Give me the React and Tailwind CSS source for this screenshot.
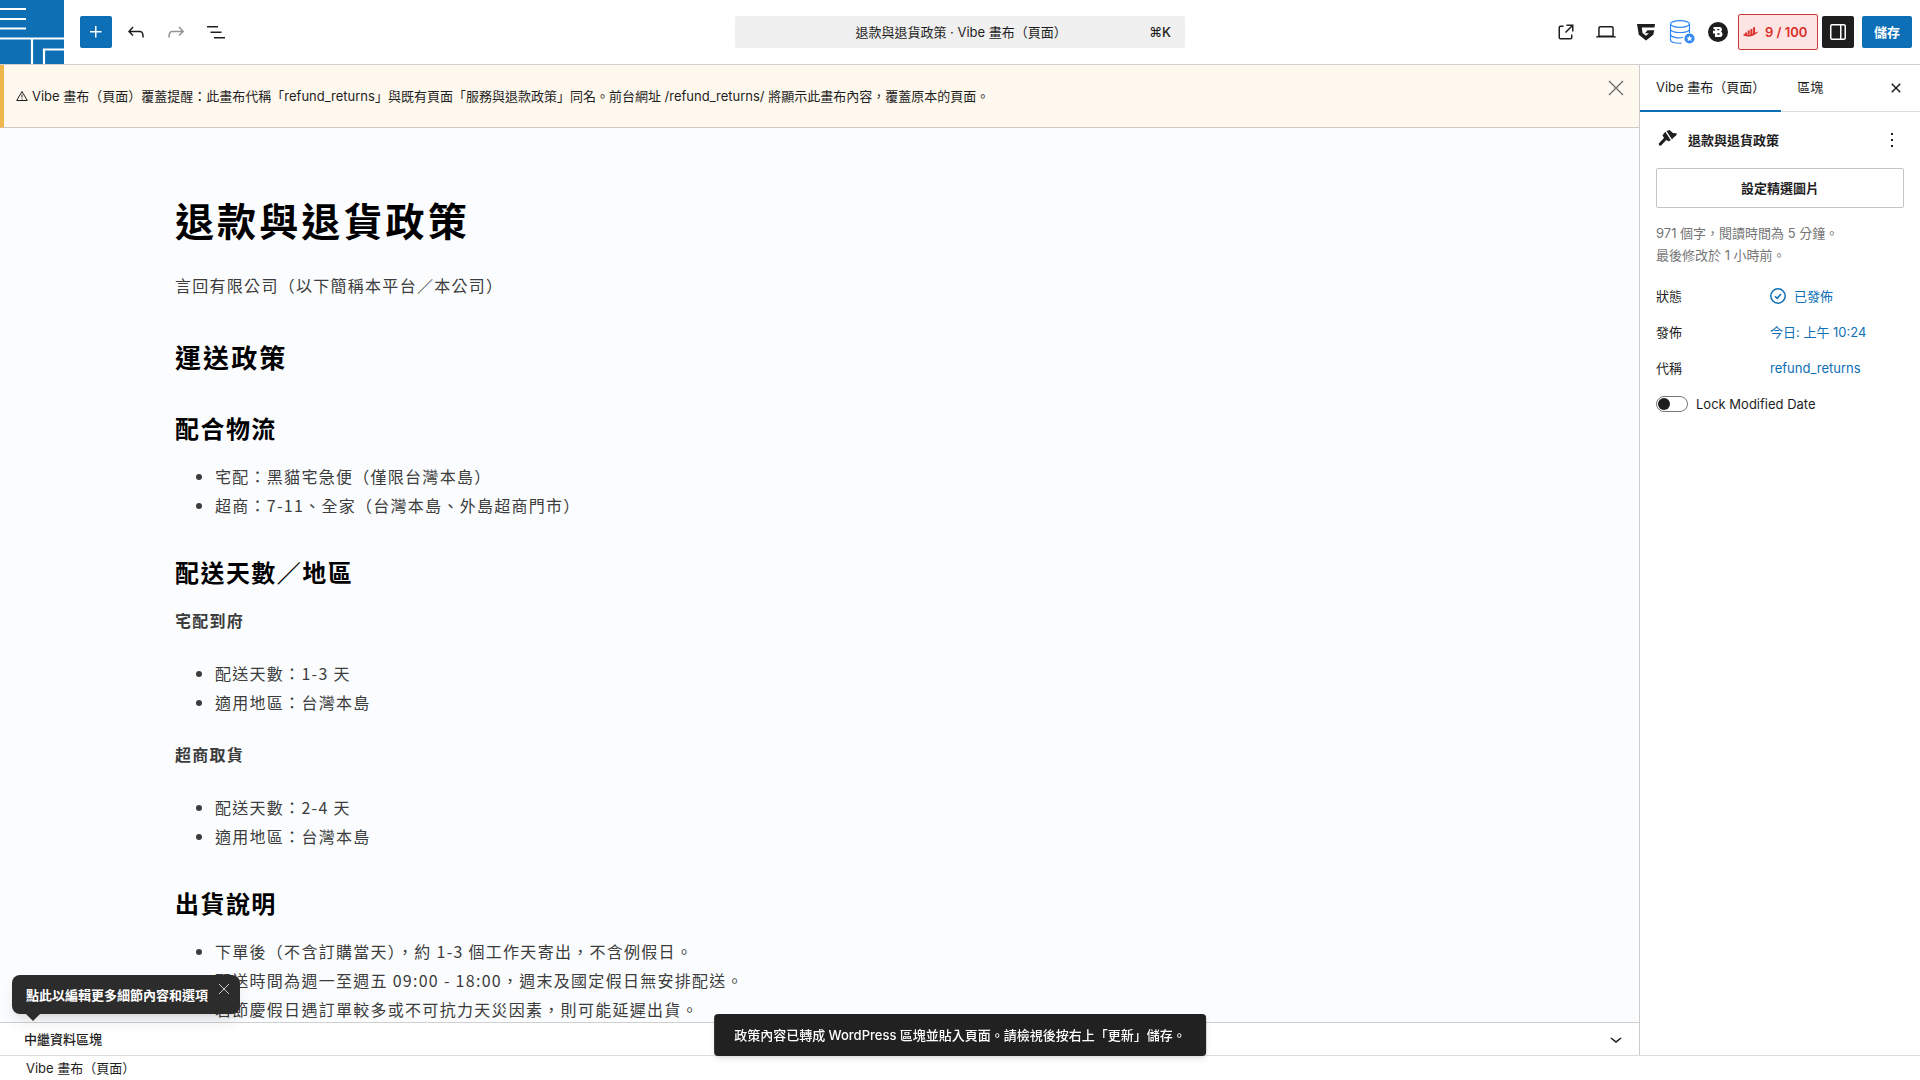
import React from 'react';

const paths = {
    plus: 'M11 12.5V17.5H12.5V12.5H17.5V11H12.5V6H11V11H6V12.5H11Z',
    undo: 'M18.3 11.7c-.6-.6-1.4-.9-2.3-.9H6.7l2.9-3.3-1.1-1-4.5 5L8.5 16l1-1-2.7-2.7H16c.5 0 .9.2 1.3.5 1 1 1 3.4 1 4.5v.3h1.5v-.2c0-1.5 0-4.3-1.5-5.7z',
    redo: 'M15.6 6.5l-1.1 1 2.9 3.3H8c-.9 0-1.7.3-2.3.9-1.4 1.5-1.4 4.2-1.4 5.6v.2h1.5v-.3c0-1.1 0-3.5 1-4.5.3-.3.7-.5 1.3-.5h9.2L14.5 15l1.1 1.1 4.6-4.6-4.6-5z',
    listView: 'M3 6h11v1.5H3V6Zm3.5 5.5h11V13h-11v-1.5ZM21 17H10v1.5h11V17Z',
    external: 'M19.5 4.5h-7V6h4.44l-5.97 5.97 1.06 1.06L18 7.06v4.44h1.5v-7Zm-13 1a2 2 0 0 0-2 2v10a2 2 0 0 0 2 2h10a2 2 0 0 0 2-2v-3H17v3a.5.5 0 0 1-.5.5h-10a.5.5 0 0 1-.5-.5v-10a.5.5 0 0 1 .5-.5h3V5.5h-3Z',
    desktop: 'M20.5 16h-.7V8c0-1.1-.9-2-2-2H6.2c-1.1 0-2 .9-2 2v8h-.7c-.8 0-1.5.7-1.5 1.5h20c0-.8-.7-1.5-1.5-1.5zM5.7 8c0-.3.2-.5.5-.5h11.6c.3 0 .5.2.5.5v7.6H5.7V8z',
    drawer: 'M18 4H6c-1.1 0-2 .9-2 2v12c0 1.1.9 2 2 2h12c1.1 0 2-.9 2-2V6c0-1.1-.9-2-2-2zm-4 14.5H6c-.3 0-.5-.2-.5-.5V6c0-.3.2-.5.5-.5h8v13zm4.5-.5c0 .3-.2.5-.5.5h-2.5v-13H18c.3 0 .5.2.5.5v12z',
    close: 'M12 13.06l3.712 3.713 1.061-1.06L13.061 12l3.712-3.712-1.06-1.06L12 10.938 8.288 7.227l-1.061 1.06L10.939 12l-3.712 3.712 1.06 1.061L12 13.061z',
    more: 'M13 19h-2v-2h2v2zm0-6h-2v-2h2v2zm0-6h-2V5h2v2z',
    chevron: 'M17.5 11.6L12 16l-5.5-4.4.9-1.2L12 14l4.5-3.6 1 1.2z',
};

const Icon = ({ name, className = 'size-6' }) => (
    <svg viewBox="0 0 24 24" fill="currentColor" aria-hidden="true" className={className}>
        <path d={paths[name]} />
    </svg>
);

const IconButton = ({ label, className = '', children, ...rest }) => (
    <button type="button" aria-label={label} className={`flex size-8 shrink-0 items-center justify-center ${className}`} {...rest}>
        {children}
    </button>
);

const SiteLogo = () => (
    <svg viewBox="0 0 64 64" className="size-16" aria-hidden="true">
        <rect width="64" height="64" fill="#0f6fb4" />
        <g stroke="#fff" strokeWidth="2.2" fill="none">
            <path d="M0 9H26M0 19H26M0 28.5H26M0 38.5H64M32 39V64M44 64V49.5H64" />
        </g>
    </svg>
);

const Header = () => (
    <header className="grid h-[65px] shrink-0 grid-cols-[1fr_auto_1fr] items-center border-b border-[#d0d0d0] bg-white">
        <div className="flex items-center">
            <a href="#dashboard" aria-label="返回" className="block"><SiteLogo /></a>
            <div className="ml-4 flex items-center gap-2">
                <IconButton label="新增區塊" className="rounded-xs bg-[#0d6fb6] text-white"><Icon name="plus" /></IconButton>
                <IconButton label="復原"><Icon name="undo" /></IconButton>
                <IconButton label="重做" className="text-[#949494]"><Icon name="redo" /></IconButton>
                <IconButton label="文件概覽"><Icon name="listView" /></IconButton>
            </div>
        </div>

        <button type="button" className="flex h-8 w-[450px] items-center rounded-xs bg-[#f0f0f0] px-3.5">
            <span className="flex-1 pl-6 text-center">退款與退貨政策 · Vibe 畫布（頁面）</span>
            <span className="font-medium">⌘K</span>
        </button>

        <div className="flex items-center justify-end gap-2 pr-2">
            <IconButton label="檢視頁面"><Icon name="external" /></IconButton>
            <IconButton label="預覽"><Icon name="desktop" /></IconButton>
            <div className="flex items-center gap-1">
                <IconButton label="Greenshift">
                    <svg viewBox="0 0 20 20" className="size-5" aria-hidden="true" fill="#1e1e1e">
                        <path d="M1 2H19L18.500 5.500H5.800L6.500 11L10 13.700L13 11.200H9L11.500 8.300H18.200L17.300 12.800L10 18.500L2.800 12.800Z" />
                    </svg>
                </IconButton>
                <IconButton label="資料庫">
                    <svg viewBox="0 0 26 26" className="size-[26px]" aria-hidden="true" fill="none" stroke="#2f86f2" strokeWidth="1.200">
                        <ellipse cx="11" cy="5" rx="9.500" ry="3.300" />
                        <path d="M1.500 5V21C1.500 23 6 24.500 12.500 24.200M20.500 5V14M1.500 10.500C3 14.500 19 14.500 20.500 10.500M1.500 15.800C3 18.800 10 19.500 14 18.300" />
                        <circle cx="20.500" cy="19.500" r="5" fill="#2f86f2" stroke="none" />
                        <path d="M20.500 16.500l1 2h2l-1.500 1.500.5 2.200-2-1.200-2 1.200.5-2.200-1.500-1.500h2z" fill="#fff" stroke="none" />
                    </svg>
                </IconButton>
                <IconButton label="Blocks">
                    <svg viewBox="0 0 20 20" className="size-5" aria-hidden="true">
                        <circle cx="10" cy="10" r="10" fill="#1e1e1e" />
                        <path d="M5.500 5H11.500C14 5 14.800 8 13 9.700C15.500 11 14.800 15 11.800 15H7V11.500H5V8.800H7V7.200H5.500Z" fill="#fff" />
                        <path d="M9.300 7.600H11.300M9.300 12H11.600" stroke="#1e1e1e" strokeWidth="1.300" />
                    </svg>
                </IconButton>
                <button type="button" className="flex h-9 w-20 items-center gap-1.5 rounded-xs border border-[#d0353d] bg-[#fce4e2] pl-1 font-semibold text-[#dc2f2b]">
                    <svg viewBox="0 0 15 10" className="h-2.5 w-4 shrink-0" aria-hidden="true" fill="currentColor">
                        <path d="M1.500 5.500H3.500V7H1.500ZM4.200 3.500H6.200V7H4.200ZM6.900 2H8.900V7H6.900ZM9.600 .3H11.600V6H9.600Z" />
                        <path d="M0 7.200C3 6.500 4.500 8.200 7 7.200L15 4.500C11 9.500 5 10.500 0 8.500Z" />
                    </svg>
                    <span>9 / 100</span>
                </button>
                <IconButton label="設定" className="rounded-xs bg-[#1e1e1e] text-white"><Icon name="drawer" /></IconButton>
            </div>
            <button type="button" className="h-8 rounded-xs bg-[#0d6fb6] px-3 font-semibold text-white">儲存</button>
        </div>
    </header>
);

const Notice = () => (
    <div className="flex h-[63px] shrink-0 justify-between border-b border-l-4 border-b-[#ccc9c2] border-l-[#f0b54d] bg-[#fef8ee] pl-3">
        <p className="self-center">
            <svg viewBox="0 0 12 12" className="mr-1 inline size-3 align-[-1px]" aria-hidden="true" fill="none" stroke="currentColor">
                <path d="M6 1.500L11.300 10.500H.7ZM6 4.500V7.500M6 8.500V9.500" />
            </svg>
            Vibe 畫布（頁面）覆蓋提醒：此畫布代稱「refund_returns」與既有頁面「服務與退款政策」同名。前台網址 /refund_returns/ 將顯示此畫布內容，覆蓋原本的頁面。
        </p>
        <button type="button" aria-label="關閉通知" className="mt-[7px] mr-[7px] flex size-8 items-center justify-center self-start text-[#666]">
            <svg viewBox="0 0 16 16" className="size-4" aria-hidden="true" stroke="currentColor" strokeWidth="1.200"><path d="M1 1L15 15M15 1L1 15" /></svg>
        </button>
    </div>
);

const SubHeading = ({ children, className = '' }) => (
    <h3 className={`mb-[18px] text-2xl font-bold tracking-[0.06em] text-black ${className}`}>{children}</h3>
);

const List = ({ items }) => (
    <ul className="list-disc pl-10">
        {items.map((item) => <li key={item}>{item}</li>)}
    </ul>
);

const Canvas = () => (
    <main className="min-h-0 flex-1 overflow-hidden bg-[#fbfcfe] px-[175px] pt-[63px] font-['Noto_Sans_CJK_TC',sans-serif] text-base/[29px] tracking-[0.08em] text-[#3c3c3c]">
        <h1 className="text-[39px]/[56px] font-bold tracking-[0.08em] text-black">退款與退貨政策</h1>
        <p className="mt-6">言回有限公司（以下簡稱本平台／本公司）</p>
        <h2 className="mt-[39px] mb-[37px] text-[26px]/[36px] font-bold tracking-[0.08em] text-black">運送政策</h2>
        <SubHeading>配合物流</SubHeading>
        <List items={['宅配：黑貓宅急便（僅限台灣本島）', '超商：7-11、全家（台灣本島、外島超商門市）']} />
        <SubHeading className="mt-9">配送天數／地區</SubHeading>
        <p className="mb-6 font-bold">宅配到府</p>
        <List items={['配送天數：1-3 天', '適用地區：台灣本島']} />
        <p className="mt-[23px] mb-6 font-bold">超商取貨</p>
        <List items={['配送天數：2-4 天', '適用地區：台灣本島']} />
        <SubHeading className="mt-9">出貨說明</SubHeading>
        <List
            items={[
                '下單後（不含訂購當天），約 1-3 個工作天寄出，不含例假日。',
                '配送時間為週一至週五 09:00 - 18:00，週末及國定假日無安排配送。',
                '若節慶假日遇訂單較多或不可抗力天災因素，則可能延遲出貨。',
            ]}
        />
    </main>
);

const MetaBoxes = () => (
    <div className="relative shrink-0 border-t border-[#d0d0d0] bg-white">
        <button type="button" className="flex h-8 w-full items-center justify-between pr-[11px] pl-6 font-medium">
            中繼資料區塊
            <Icon name="chevron" />
        </button>
        <div role="tooltip" className="absolute bottom-full left-3 mb-[9px] flex h-[39px] items-start rounded-lg bg-[#2c2c2c] pr-2.5 pl-3.5 font-semibold text-white shadow-lg">
            <span className="self-center">點此以編輯更多細節內容和選項</span>
            <button type="button" aria-label="關閉提示" className="mt-2 ml-2.5 text-[#ccc]">
                <svg viewBox="0 0 12 12" className="size-3" aria-hidden="true" stroke="currentColor"><path d="M1 1L11 11M11 1L1 11" /></svg>
            </button>
            <svg viewBox="0 0 14 7" className="absolute top-full left-3.5 h-[7px] w-3.5" aria-hidden="true" fill="#2c2c2c"><path d="M0 0H14L7 7Z" /></svg>
        </div>
    </div>
);

const Row = ({ label, children }) => (
    <div className="flex h-8 items-center">
        <dt className="w-[114px]">{label}</dt>
        <dd className="text-[#0d6fb6]">{children}</dd>
    </div>
);

const Sidebar = () => (
    <aside className="w-[281px] shrink-0 border-l border-[#ccc] bg-white">
        <div className="flex h-[47px] items-center border-b border-[#ddd]">
            <button type="button" className="h-[47px] border-b-2 border-[#0d6fb6] px-4">Vibe 畫布（頁面）</button>
            <button type="button" className="h-[47px] border-b-2 border-transparent px-4">區塊</button>
            <IconButton label="關閉設定" className="mr-2 ml-auto"><Icon name="close" /></IconButton>
        </div>
        <div className="p-4 pt-3">
            <div className="flex h-8 items-center">
                <svg viewBox="0 0 22 20" className="-mt-1 mr-2.5 h-5 w-[22px]" aria-hidden="true" fill="#1e1e1e">
                    <path d="M10.500 3L13.500 2L17 5L21 5.500C21 7 19 8.500 17.500 9.500L16 11.500Z" />
                    <path d="M9.300 3.800L14.800 12.200L12.500 13.300L10.300 12L5.300 17.300C4 18.500 2 16.800 3 15.300L8 10L6.500 7.300Z" />
                </svg>
                <h2 className="flex-1 font-semibold">退款與退貨政策</h2>
                <IconButton label="更多操作" className="-mr-1"><Icon name="more" /></IconButton>
            </div>
            <button type="button" className="mt-3 h-10 w-full rounded-xs border border-[#c4c4c4] font-semibold">設定精選圖片</button>
            <p className="mt-3.5 text-[13px]/[22px] text-[#757575]">
                971 個字，閱讀時間為 5 分鐘。<br />最後修改於 1 小時前。
            </p>
            <dl className="mt-3.5 flex flex-col gap-1">
                <Row label="狀態">
                    <button type="button" className="flex items-center gap-2">
                        <svg viewBox="0 0 16 16" className="size-4" aria-hidden="true" fill="none" stroke="currentColor" strokeWidth="1.500">
                            <circle cx="8" cy="8" r="7.200" />
                            <path d="M5 8.200L7.200 10.300L11 6" />
                        </svg>
                        已發佈
                    </button>
                </Row>
                <Row label="發佈"><button type="button">今日: 上午 10:24</button></Row>
                <Row label="代稱"><button type="button">refund_returns</button></Row>
            </dl>
            <label className="mt-2.5 flex items-center gap-2">
                <input type="checkbox" role="switch" className="h-4 w-8 appearance-none rounded-full border border-[#777] bg-white before:m-px before:block before:size-3 before:rounded-full before:bg-[#1e1e1e] checked:before:ml-[17px]" />
                Lock Modified Date
            </label>
        </div>
    </aside>
);

const App = () => (
    <div lang="zh-Hant" className="flex h-screen flex-col overflow-hidden bg-white font-[Inter,'Noto_Sans_CJK_TC',sans-serif] text-[13px]/[20px] text-[#1e1e1e]">
        <Header />
        <div className="flex min-h-0 flex-1">
            <div className="flex min-w-0 flex-1 flex-col">
                <Notice />
                <Canvas />
                <MetaBoxes />
            </div>
            <Sidebar />
        </div>
        <footer className="flex h-[25px] shrink-0 items-center border-t border-[#ddd] px-[26px]">Vibe 畫布（頁面）</footer>
        <div role="status" className="fixed bottom-6 left-1/2 flex h-[42px] -translate-x-1/2 items-center rounded-sm bg-[#212121] px-5 font-medium whitespace-nowrap text-white shadow-md">
            政策內容已轉成 WordPress 區塊並貼入頁面。請檢視後按右上「更新」儲存。
        </div>
    </div>
);

export default App;
